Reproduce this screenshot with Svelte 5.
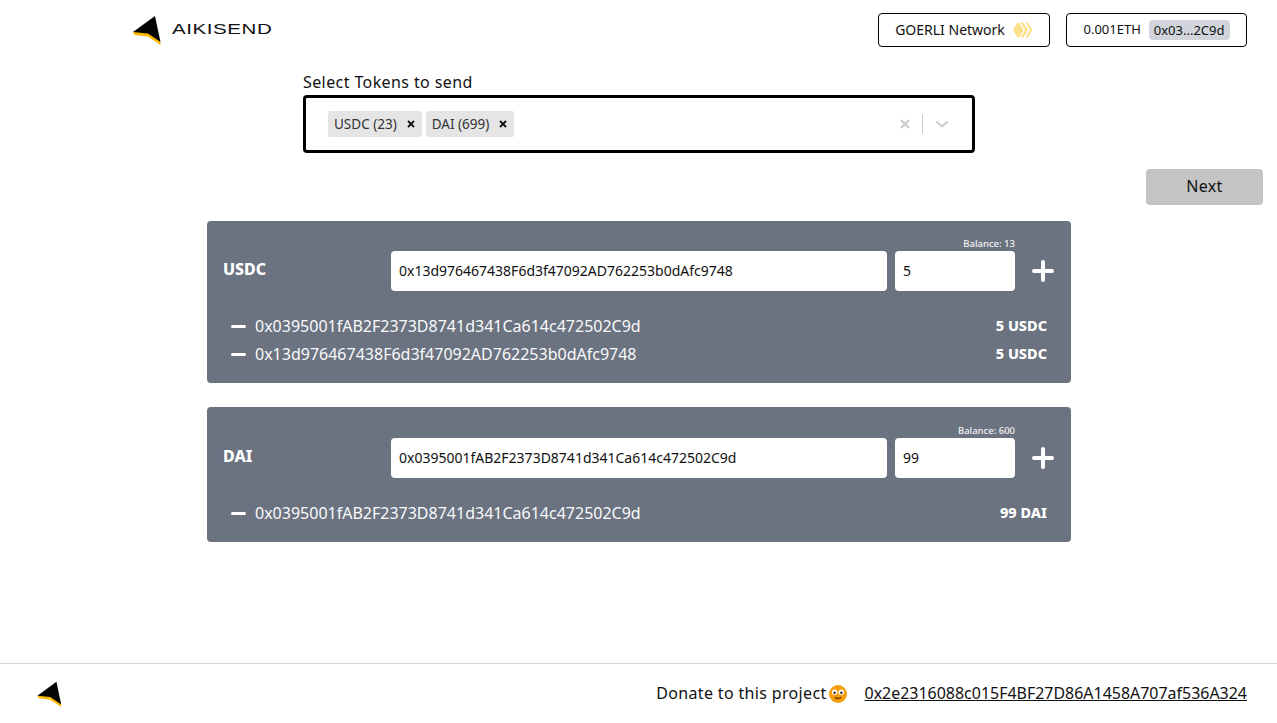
<script>
  const tokens = [
    {
      name: 'USDC',
      address: '0x13d976467438F6d3f47092AD762253b0dAfc9748',
      amount: '5',
      balance: 13,
      rows: [
        { to: '0x0395001fAB2F2373D8741d341Ca614c472502C9d', value: '5 USDC' },
        { to: '0x13d976467438F6d3f47092AD762253b0dAfc9748', value: '5 USDC' }
      ]
    },
    {
      name: 'DAI',
      address: '0x0395001fAB2F2373D8741d341Ca614c472502C9d',
      amount: '99',
      balance: 600,
      rows: [{ to: '0x0395001fAB2F2373D8741d341Ca614c472502C9d', value: '99 DAI' }]
    }
  ]
  const chips = ['USDC (23)', 'DAI (699)']
</script>

{#snippet logo(w, h)}
  <svg class="mark" viewBox="0 0 28 30" width={w} height={h}>
    <path d="M0 17 L1.5 20 L15 21.5 L27.5 30 L27 24 L15 16 Z" fill="#ffb800" />
    <path d="M0 17 L22 1 L27.5 27 L15 18.5 Z" fill="#050505" />
  </svg>
{/snippet}

<div class="page">
  <header>
    <div class="brand">
      {@render logo(28, 30)}
      <span class="wordmark">AIKISEND</span>
    </div>
    <div class="actions">
      <button class="pill network">
        <span class="lift">GOERLI Network</span>
        <svg viewBox="0 0 20 16" width="20" height="16">
          <path d="M0 8 L4.5 .5 H6 L10.5 8 L6 15.5 H4.5 Z" fill="#ffe08a" />
          <path d="M7.5 .5 H10.5 L15 8 L10.5 15.5 H7.5 L12 8 Z M12.5 .5 H15 L19.5 8 L15 15.5 H12.5 L17 8 Z" fill="#ffe08a" />
        </svg>
      </button>
      <button class="pill account">
        <span class="lift">0.001ETH</span> <span class="addr">0x03...2C9d</span>
      </button>
    </div>
  </header>

  <main>
    <section class="picker">
      <div class="picker-label">Select Tokens to send</div>
      <div class="select">
        <div class="chips">
          {#each chips as chip}
            <span class="chip">{chip}
              <svg viewBox="0 0 8 8" width="8" height="8"><path d="M1 1 L7 7 M7 1 L1 7" stroke="#111" stroke-width="1.8" /></svg>
            </span>
          {/each}
        </div>
        <div class="indicators">
          <svg viewBox="0 0 10 10" width="10" height="10"><path d="M1 1 L9 9 M9 1 L1 9" stroke="#ccc" stroke-width="2.4" /></svg>
          <span class="sep"></span>
          <svg viewBox="0 0 14 8" width="14" height="8"><path d="M1.5 1.5 L7 6.5 L12.5 1.5" fill="none" stroke="#ccc" stroke-width="2" /></svg>
        </div>
      </div>
    </section>

    <div class="next-row">
      <button class="next">Next</button>
    </div>

    <div class="cards">
      {#each tokens as token}
        <section class="card">
          <div class="balance">Balance: {token.balance}</div>
          <div class="entry">
            <div class="token-name">{token.name}</div>
            <input class="address" value={token.address} />
            <input class="amount" value={token.amount} />
            <svg class="plus" viewBox="0 0 24 24" width="24" height="24">
              <path d="M12 3 V21 M3 12 H21" stroke="#fff" stroke-width="4" stroke-linecap="round" />
            </svg>
          </div>
          <ul>
            {#each token.rows as row}
              <li>
                <span class="minus"></span>
                <span class="to">{row.to}</span>
                <b>{row.value}</b>
              </li>
            {/each}
          </ul>
        </section>
      {/each}
    </div>
  </main>

  <footer>
    <div class="foot-mark">{@render logo(25, 26)}</div>
    <div class="donate">
      <span class="spaced">Donate to this project</span>
      <svg viewBox="0 0 16 16" width="18" height="18">
        <circle cx="8" cy="8" r="8" fill="#f59e0b" />
        <circle cx="5" cy="6.5" r="2.4" fill="#fff" />
        <circle cx="11" cy="6.5" r="2.4" fill="#fff" />
        <circle cx="5" cy="6.8" r="1.1" fill="#422" />
        <circle cx="11" cy="6.8" r="1.1" fill="#422" />
        <path d="M5 11 Q8 13 11 11" stroke="#7a3e00" stroke-width="1.3" fill="none" />
      </svg>
      <a href="#top">0x2e2316088c015F4BF27D86A1458A707af536A324</a>
    </div>
  </footer>
</div>

<style>
  :global(body) {
    margin: 0;
    background: #fff;
  }
  .page {
    height: 723px;
    display: flex;
    flex-direction: column;
    font-family: "Noto Sans", sans-serif;
    color: #111;
    overflow: hidden;
  }
  header {
    height: 60px;
    flex: none;
    display: flex;
    justify-content: space-between;
    box-sizing: border-box;
    padding: 13px 30px 0 133px;
  }
  .brand {
    display: flex;
    align-items: flex-start;
    gap: 11px;
    padding-top: 2px;
  }
  .wordmark {
    font-family: "Liberation Sans", sans-serif;
    font-size: 15px;
    line-height: 28px;
    letter-spacing: 0.4px;
    transform: scaleX(1.37);
    transform-origin: left center;
    color: #111;
  }
  .actions {
    display: flex;
    gap: 16px;
  }
  .pill {
    height: 34px;
    box-sizing: border-box;
    border: 1px solid #000;
    border-radius: 4px;
    background: #fff;
    font: inherit;
    font-size: 14px;
    color: #111;
    display: flex;
    align-items: center;
    justify-content: center;
    padding: 0;
  }
  .lift {
    margin-top: -2px;
  }
  .network {
    width: 172px;
    gap: 8px;
  }
  .account {
    width: 181px;
    gap: 8px;
    font-size: 13px;
  }
  .addr {
    background: #d1d5db;
    border-radius: 4px;
    padding: 0 5px;
    line-height: 20px;
  }
  main {
    flex: 1;
  }
  .picker {
    width: 672px;
    margin: 0 auto;
    position: relative;
    left: 0.5px;
  }
  .picker-label {
    font-size: 16px;
    letter-spacing: 0.4px;
    line-height: 22px;
    margin-top: 11px;
    margin-bottom: 2px;
  }
  .select {
    height: 58px;
    box-sizing: border-box;
    border: 3px solid #000;
    border-radius: 4px;
    display: flex;
    align-items: center;
    justify-content: space-between;
    padding: 0 23px 0 22px;
  }
  .chips {
    display: flex;
    gap: 4px;
  }
  .chip {
    background: #e5e5e5;
    border-radius: 2px;
    height: 26px;
    display: flex;
    align-items: center;
    gap: 10px;
    padding: 0 7px 0 6px;
    font-size: 13.5px;
    color: #333;
  }
  .indicators {
    display: flex;
    align-items: center;
    gap: 12px;
  }
  .sep {
    width: 1px;
    height: 20px;
    background: #ccc;
  }
  .next-row {
    display: flex;
    justify-content: flex-end;
    padding-right: 14px;
    margin-top: 16px;
  }
  .next {
    width: 117px;
    height: 36px;
    border: 0;
    border-radius: 4px;
    background: #c4c4c4;
    font: inherit;
    font-size: 16px;
    letter-spacing: 0.3px;
    color: #111;
    padding: 0 0 2px;
  }
  .cards {
    width: 864px;
    margin: 16px 0 0 207px;
    display: flex;
    flex-direction: column;
    gap: 24px;
  }
  .card {
    background: #6b7280;
    border-radius: 4px;
    padding: 16px 16px 15px;
    color: #fff;
  }
  .card + .card {
    padding-top: 17px;
  }
  .balance {
    font-size: 9.5px;
    line-height: 13px;
    height: 14px;
    text-align: right;
    padding-right: 40px;
    font-weight: 500;
    color: #f3f4f6;
  }
  .entry {
    display: flex;
    align-items: center;
    gap: 8px;
  }
  .token-name {
    width: 160px;
    font-size: 16px;
    font-weight: 800;
    margin-top: -4px;
  }
  input {
    height: 40px;
    box-sizing: border-box;
    border: 0;
    border-radius: 4px;
    background: #fff;
    font: inherit;
    font-size: 14px;
    color: #111;
    padding: 0 8px 1px;
    outline: none;
  }
  .address {
    width: 496px;
  }
  .amount {
    width: 120px;
  }
  .plus {
    margin-left: 8px;
  }
  ul {
    list-style: none;
    margin: 21px 0 0;
    padding: 0 8px;
  }
  li {
    height: 28px;
    display: flex;
    align-items: center;
    font-size: 16px;
  }
  .minus {
    width: 15px;
    height: 3px;
    border-radius: 2px;
    background: #fff;
    margin-right: 9px;
  }
  .to {
    flex: 1;
    color: #f9fafb;
  }
  li b {
    font-size: 14.5px;
    font-weight: 800;
    margin-top: -2px;
  }
  footer {
    height: 60px;
    flex: none;
    box-sizing: border-box;
    border-top: 1px solid #d4d4d4;
    display: flex;
    align-items: center;
    justify-content: space-between;
    padding: 0 30px 0 37px;
  }
  .foot-mark {
    display: flex;
    margin-top: 1px;
  }
  .donate {
    display: flex;
    align-items: center;
    font-size: 16px;
    gap: 2px;
    color: #111;
  }
  .spaced {
    letter-spacing: 0.34px;
    margin-top: -2px;
  }
  .donate a {
    font-size: 15.96px;
    color: #111;
    margin-left: 16px;
    margin-top: -2px;
  }
</style>
